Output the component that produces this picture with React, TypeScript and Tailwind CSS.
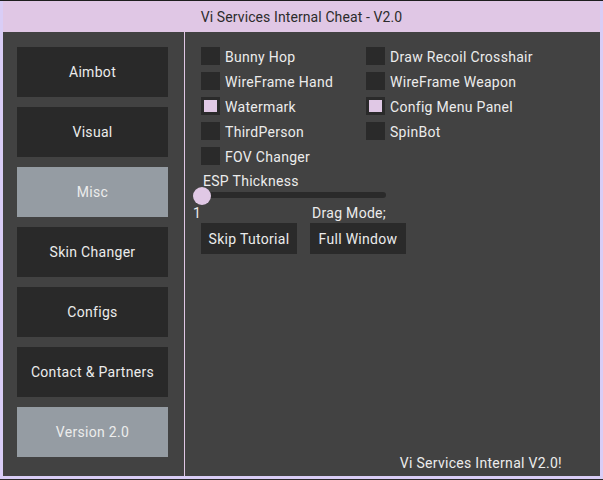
import React from 'react';

const tabs = ['Aimbot', 'Visual', 'Misc', 'Skin Changer', 'Configs', 'Contact & Partners', 'Version 2.0'];

const leftOptions = [
  { label: 'Bunny Hop', on: false },
  { label: 'WireFrame Hand', on: false },
  { label: 'Watermark', on: true },
  { label: 'ThirdPerson', on: false },
  { label: 'FOV Changer', on: false },
];

const rightOptions = [
  { label: 'Draw Recoil Crosshair', on: false },
  { label: 'WireFrame Weapon', on: false },
  { label: 'Config Menu Panel', on: true },
  { label: 'SpinBot', on: false },
];

function Check({ label, on }: { label: string; on: boolean }) {
  return (
    <div className="flex items-center h-[18px] gap-[5px]">
      <div className="w-[19px] h-[18px] bg-[#2a2a2a] flex items-center justify-center">
        {on && <div className="w-[13px] h-[12px] bg-[#e0c8e5]" />}
      </div>
      <span className="leading-[18px] whitespace-nowrap translate-y-px">{label}</span>
    </div>
  );
}

export default function App() {
  return (
    <div
      className="w-[603px] h-[480px] flex flex-col bg-[#d9cdf6] border-t border-t-[#1e1e1e] border-b border-b-[#2a2a2a] text-[14px] tracking-[0.3px] text-[#ececec]"
      style={{ fontFamily: 'Roboto, "Liberation Sans", sans-serif' }}
    >
      {/* title bar */}
      <div className="h-[31px] mx-[3px] bg-[#e0c7e5] flex items-center justify-center text-[#2c2c2c] tracking-[0.1px]">
        <span className="translate-y-px">Vi Services Internal Cheat - V2.0</span>
      </div>

      <div className="flex h-[444px] mx-[3px]">
        {/* sidebar */}
        <div className="w-[181px] bg-[#424242] pl-[14px] pt-[15px] flex flex-col gap-[10px]">
          {tabs.map((t) => {
            const active = t === 'Misc' || t === 'Version 2.0';
            return (
              <div
                key={t}
                className={`w-[151px] h-[50px] flex items-center justify-center ${active ? 'bg-[#959ca3]' : 'bg-[#292929]'}`}
              >
                {t}
              </div>
            );
          })}
        </div>

        <div className="w-px bg-[#e0c7e5]" />

        {/* content */}
        <div className="flex-1 bg-[#424242] pl-[16px] pt-[15px] flex flex-col">
          <div className="flex">
            <div className="w-[165px] flex flex-col gap-[7px]">
              {leftOptions.map((o) => (
                <Check key={o.label} {...o} />
              ))}
            </div>
            <div className="flex flex-col gap-[7px]">
              {rightOptions.map((o) => (
                <Check key={o.label} {...o} />
              ))}
            </div>
          </div>

          <div className="mt-[7px] leading-[18px] ml-[2px]">ESP Thickness</div>

          <div className="relative ml-[-8px] mt-[-3px] w-[193px] h-[18px]">
            <div className="absolute left-[2px] right-0 top-[5px] h-[6px] rounded-full bg-[#2a2a2a]" />
            <div className="absolute left-0 top-0 w-[18px] h-[18px] rounded-full bg-[#e0c8e5]" />
          </div>

          <div className="flex ml-[-8px] mt-[-1px] leading-[18px]">
            <span className="w-[119px]">1</span>
            <span>Drag Mode;</span>
          </div>

          <div className="flex gap-[13px] mt-[1px]">
            <div className="w-[96px] h-[31px] bg-[#2a2a2a] flex items-center justify-center">
              <span className="translate-y-px">Skip Tutorial</span>
            </div>
            <div className="w-[96px] h-[31px] bg-[#2a2a2a] flex items-center justify-center">
              <span className="translate-y-px">Full Window</span>
            </div>
          </div>

          <div className="mt-auto self-end pr-[38px] pb-[4px] leading-[18px]">Vi Services Internal V2.0!</div>
        </div>
      </div>
      <div className="flex-1" />
    </div>
  );
}
